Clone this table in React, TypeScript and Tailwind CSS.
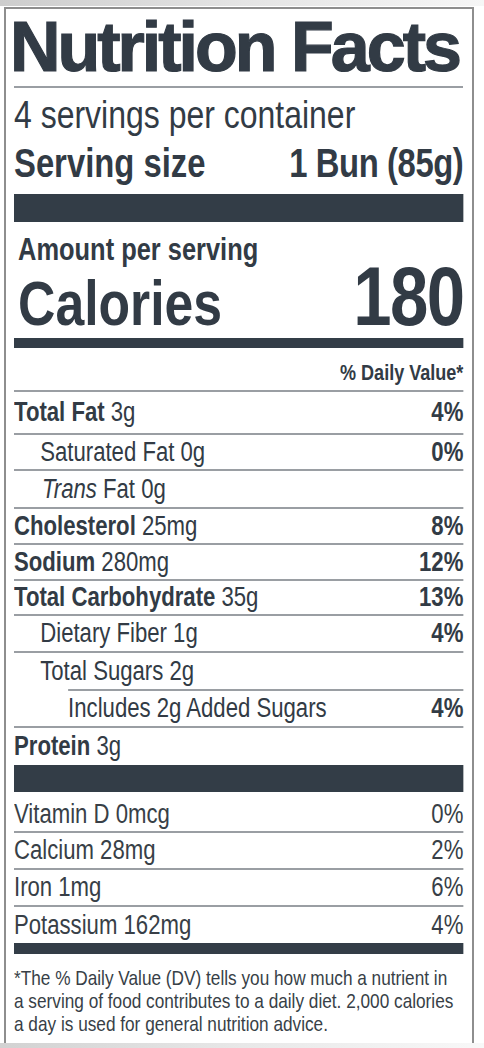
type Nutrient = {
  name: string;
  amount: string;
  dv?: string;
  bold?: boolean;
  italic?: string;
  indent: string;
  height: string;
  line?: string;
};

// no narrow face is installed, so the label body is Liberation Sans squeezed to ~82% width
const nutrients: Nutrient[] = [
  { name: "Total Fat", amount: "3g", dv: "4%", bold: true, indent: "pl-0", height: "h-[41px]", line: "ml-0" },
  { name: "Saturated Fat", amount: "0g", dv: "0%", indent: "pl-[32px]", height: "h-[34px]", line: "ml-0" },
  { name: "Fat", italic: "Trans", amount: "0g", indent: "pl-[34px]", height: "h-[36px]", line: "ml-0" },
  { name: "Cholesterol", amount: "25mg", dv: "8%", bold: true, indent: "pl-0", height: "h-[34px]", line: "ml-0" },
  { name: "Sodium", amount: "280mg", dv: "12%", bold: true, indent: "pl-0", height: "h-[34px]", line: "ml-0" },
  { name: "Total Carbohydrate", amount: "35g", dv: "13%", bold: true, indent: "pl-0", height: "h-[33px]", line: "ml-0" },
  { name: "Dietary Fiber", amount: "1g", dv: "4%", indent: "pl-[32px]", height: "h-[35px]", line: "ml-0" },
  { name: "Total Sugars", amount: "2g", indent: "pl-[32px]", height: "h-[36px]", line: "ml-[66px]" },
  { name: "Includes 2g Added Sugars", amount: "", dv: "4%", indent: "pl-[66px]", height: "h-[35px]", line: "ml-0" },
  { name: "Protein", amount: "3g", bold: true, indent: "pl-0", height: "h-[37px]" },
];

const vitamins = [
  { label: "Vitamin D 0mcg", dv: "0%", height: "h-[39px] pt-[5px]" },
  { label: "Calcium 28mg", dv: "2%", height: "h-[35px]" },
  { label: "Iron 1mg", dv: "6%", height: "h-[35px]" },
  { label: "Potassium 162mg", dv: "4%", height: "h-[36px]", last: true },
];

function Rule({ className = "" }: { className?: string }) {
  return <div className={`h-[2px] bg-[#9a9ea3] ${className}`} />;
}

export default function App() {
  return (
    <div className="h-[1048px] w-[484px] overflow-hidden bg-white font-['Liberation_Sans',Arial,sans-serif] text-[#323b45]">
      <div className="h-[6px] bg-gradient-to-r from-[#cdcdcd] via-[#e4e4e4] to-[#f6f6f6]" />
      <div className="mt-[1px] ml-[4px] flex h-[1036px] w-[470px] flex-col border-x-2 border-t-2 border-[#8e8e8e] pl-[8px] pr-[9px]">
        <h1 className="-ml-[4px] h-[77px] whitespace-nowrap text-[70px] leading-[77px] font-bold tracking-[-3px] [-webkit-text-stroke:1.2px_#323b45]">
          Nutrition Facts
        </h1>
        <Rule />

        <div className="w-[548px] origin-left scale-x-[0.82]">
          <div className="mt-[7px] text-[39px] leading-[40px] whitespace-nowrap">
            4 servings per container
          </div>
          <div className="mt-[6px] flex justify-between text-[40px] leading-[44px] font-bold whitespace-nowrap">
            <span>Serving size</span>
            <span className="tracking-[-0.5px]">1 Bun (85g)</span>
          </div>

          <div className="mt-[9px] h-[28px] bg-[#333d47]" />

          <div className="mt-[12px] pl-[5px] text-[31px] leading-[32px] font-bold whitespace-nowrap">
            Amount per serving
          </div>
          <div className="flex h-[60px] items-baseline justify-between pl-[5px] font-bold whitespace-nowrap">
            <span className="text-[63px] leading-[44px]">Calories</span>
            <span className="text-[84px] leading-[60px] tracking-[-2px]">180</span>
          </div>

          <div className="mt-[12px] h-[10px] bg-[#333d47]" />

          <div className="h-[42px] pt-[9px] text-right text-[22px] leading-[32px] font-bold">
            % Daily Value*
          </div>
          <Rule />

          {nutrients.map((n) => (
            <div key={n.name + n.amount}>
              <div className={`${n.height} ${n.indent} flex items-center justify-between text-[27px] leading-none whitespace-nowrap`}>
                <span>
                  {n.italic && <span className="italic">{n.italic} </span>}
                  <span className={n.bold ? "font-bold" : ""}>{n.name}</span>
                  {n.amount && ` ${n.amount}`}
                </span>
                {n.dv && <span className="font-bold">{n.dv}</span>}
              </div>
              {n.line && <Rule className={n.line} />}
            </div>
          ))}

          <div className="h-[27px] bg-[#333d47]" />

          {vitamins.map((v) => (
            <div key={v.label}>
              <div className={`${v.height} flex items-center justify-between text-[27px] leading-none whitespace-nowrap text-[#383f47]`}>
                <span>{v.label}</span>
                <span>{v.dv}</span>
              </div>
              {!v.last && <Rule />}
            </div>
          ))}

          <div className="h-[11px] bg-[#333d47]" />

          <p className="pt-[12px] text-[21px] leading-[23px] whitespace-nowrap text-[#383f47]">
            *The % Daily Value (DV) tells you how much a nutrient in
            <br />
            a serving of food contributes to a daily diet. 2,000 calories
            <br />
            a day is used for general nutrition advice.
          </p>
        </div>
      </div>
      <div className="h-[5px] bg-gradient-to-r from-[#d2d2d2] via-[#e8e8e8] to-[#f8f8f8]" />
    </div>
  );
}
